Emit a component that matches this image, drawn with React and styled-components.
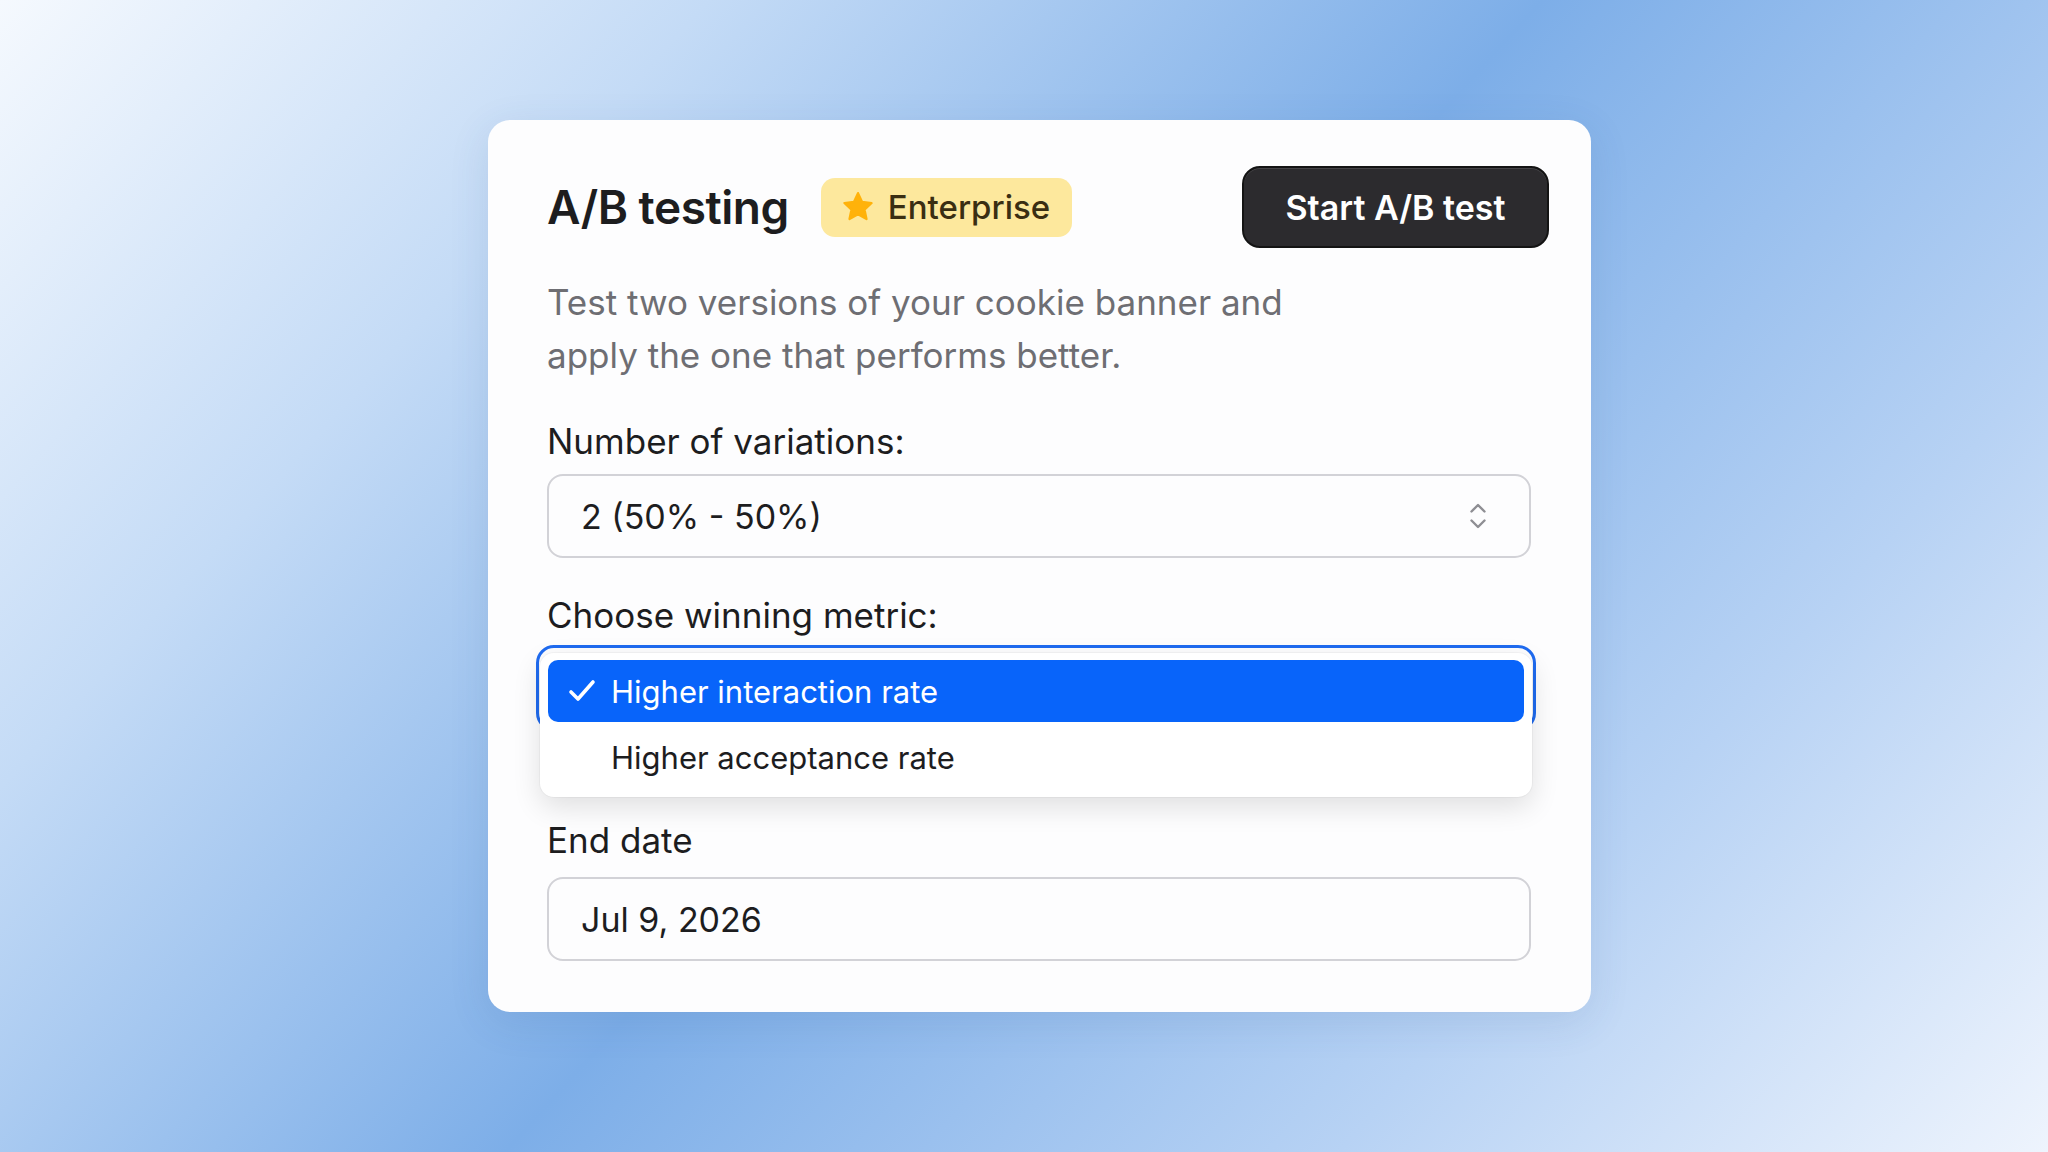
import React from "react";
import styled, { createGlobalStyle } from "styled-components";

const GlobalStyle = createGlobalStyle`
  * { box-sizing: border-box; }
  body {
    margin: 0;
    font-family: Inter, "Noto Sans", "Liberation Sans", sans-serif;
    -webkit-font-smoothing: antialiased;
  }
`;

const Page = styled.div`
  width: 2048px;
  height: 1152px;
  overflow: hidden;
  padding: 120px 0 0 488px;
  background: linear-gradient(
    132deg,
    #f5f9fe 0%,
    #c4dbf6 23%,
    #7daee8 50%,
    #b7d2f4 77%,
    #eef4fd 100%
  );
`;

const Card = styled.div`
  width: 1103px;
  padding: 46px 42px 51px 59px;
  background: #fdfdfe;
  border-radius: 22px;
  box-shadow: 0 10px 40px rgba(40, 80, 140, 0.12);
`;

const Header = styled.div`
  display: flex;
  align-items: center;
  justify-content: space-between;
`;

const TitleGroup = styled.div`
  display: flex;
  align-items: center;
  gap: 32px;
`;

const Title = styled.h1`
  margin: 0;
  font-size: 46px;
  font-weight: 600;
  letter-spacing: -0.01em;
  color: #1d1d1f;
`;

const Badge = styled.span`
  display: inline-flex;
  align-items: center;
  gap: 13px;
  height: 59px;
  padding: 0 22px 0 20px;
  border-radius: 14px;
  background: #fde89d;
  color: #3a2e12;
  font-size: 33px;
  font-weight: 500;
`;

const PrimaryButton = styled.button`
  width: 307px;
  height: 82px;
  border: 2px solid #141414;
  border-radius: 18px;
  background: #2c2b2e;
  box-shadow: inset 0 1px 0 rgba(255, 255, 255, 0.12);
  color: #ffffff;
  font-family: inherit;
  font-size: 34px;
  font-weight: 600;
  cursor: pointer;
`;

const Description = styled.p`
  margin: 28px 0 0;
  max-width: 800px;
  font-size: 35px;
  line-height: 53px;
  color: #6e6e73;
`;

const Fields = styled.div`
  width: 984px;
  padding-top: 37px;
  display: flex;
  flex-direction: column;
`;

const Label = styled.div`
  font-size: 35px;
  line-height: 44px;
  color: #1d1d1f;
  margin-top: ${(p) => p.$top || 0}px;
  margin-bottom: ${(p) => p.$bottom || 11}px;
`;

const Input = styled.div`
  display: flex;
  align-items: center;
  justify-content: space-between;
  height: 84px;
  padding: 0 42px 0 32px;
  border: 2px solid #d2d2d7;
  border-radius: 16px;
  background: #fdfdfe;
  font-size: 34px;
  color: #1d1d1f;
`;

const FocusSelect = styled.div`
  position: relative;
  width: 1000px;
  height: 86px;
  margin-left: -11px;
  border: 3px solid #1f6bf0;
  border-radius: 18px;
  background: #fdfdfe;
`;

const Menu = styled.div`
  position: absolute;
  top: 5px;
  left: 1px;
  right: 1px;
  padding: 7px 8px 9px;
  display: flex;
  flex-direction: column;
  gap: 4px;
  background: #ffffff;
  border-radius: 14px;
  box-shadow: 0 10px 28px rgba(0, 0, 0, 0.12), 0 0 0 1px rgba(0, 0, 0, 0.03);
  z-index: 2;
`;

const Option = styled.div`
  display: flex;
  align-items: center;
  height: 62px;
  padding-left: 20px;
  border-radius: 10px;
  background: ${(p) => (p.$active ? "#0864fa" : "transparent")};
  color: ${(p) => (p.$active ? "#ffffff" : "#1d1d1f")};
  font-size: 31px;
`;

const CheckSlot = styled.span`
  display: inline-flex;
  width: 43px;
`;

const Spacer = styled.div`
  height: 87px;
`;

const Star = () => (
  <svg width="34" height="34" viewBox="0 0 24 24">
    <path
      d="M12 2.2l2.9 6.2 6.7.8-5 4.6 1.4 6.7L12 17.1l-6 3.4 1.4-6.7-5-4.6 6.7-.8z"
      fill="#ffb20a"
      stroke="#ffb20a"
      strokeWidth="1.6"
      strokeLinejoin="round"
    />
  </svg>
);

const Chevrons = () => (
  <svg width="18" height="34" viewBox="0 0 18 34" fill="none">
    <path
      d="M2.5 12.5l6.5-6.5 6.5 6.5M2.5 21.5l6.5 6.5 6.5-6.5"
      stroke="#8e8e93"
      strokeWidth="2.4"
      strokeLinecap="round"
      strokeLinejoin="round"
    />
  </svg>
);

const Check = () => (
  <svg width="28" height="24" viewBox="0 0 28 24" fill="none">
    <path
      d="M3 13l7 7L25 3"
      stroke="#ffffff"
      strokeWidth="3.6"
      strokeLinecap="round"
      strokeLinejoin="round"
    />
  </svg>
);

export default function App() {
  return (
    <>
      <GlobalStyle />
      <Page>
        <Card>
          <Header>
            <TitleGroup>
              <Title>A/B testing</Title>
              <Badge>
                <Star />
                Enterprise
              </Badge>
            </TitleGroup>
            <PrimaryButton>Start A/B test</PrimaryButton>
          </Header>

          <Description>
            Test two versions of your cookie banner and apply the one that
            performs better.
          </Description>

          <Fields>
            <Label>Number of variations:</Label>
            <Input>
              <span>2 (50% - 50%)</span>
              <Chevrons />
            </Input>

            <Label $top={35} $bottom={8}>
              Choose winning metric:
            </Label>
            <FocusSelect>
              <Menu>
                <Option $active>
                  <CheckSlot>
                    <Check />
                  </CheckSlot>
                  Higher interaction rate
                </Option>
                <Option>
                  <CheckSlot />
                  Higher acceptance rate
                </Option>
              </Menu>
            </FocusSelect>
            <Spacer />

            <Label $bottom={15}>End date</Label>
            <Input>
              <span>Jul 9, 2026</span>
            </Input>
          </Fields>
        </Card>
      </Page>
    </>
  );
}
